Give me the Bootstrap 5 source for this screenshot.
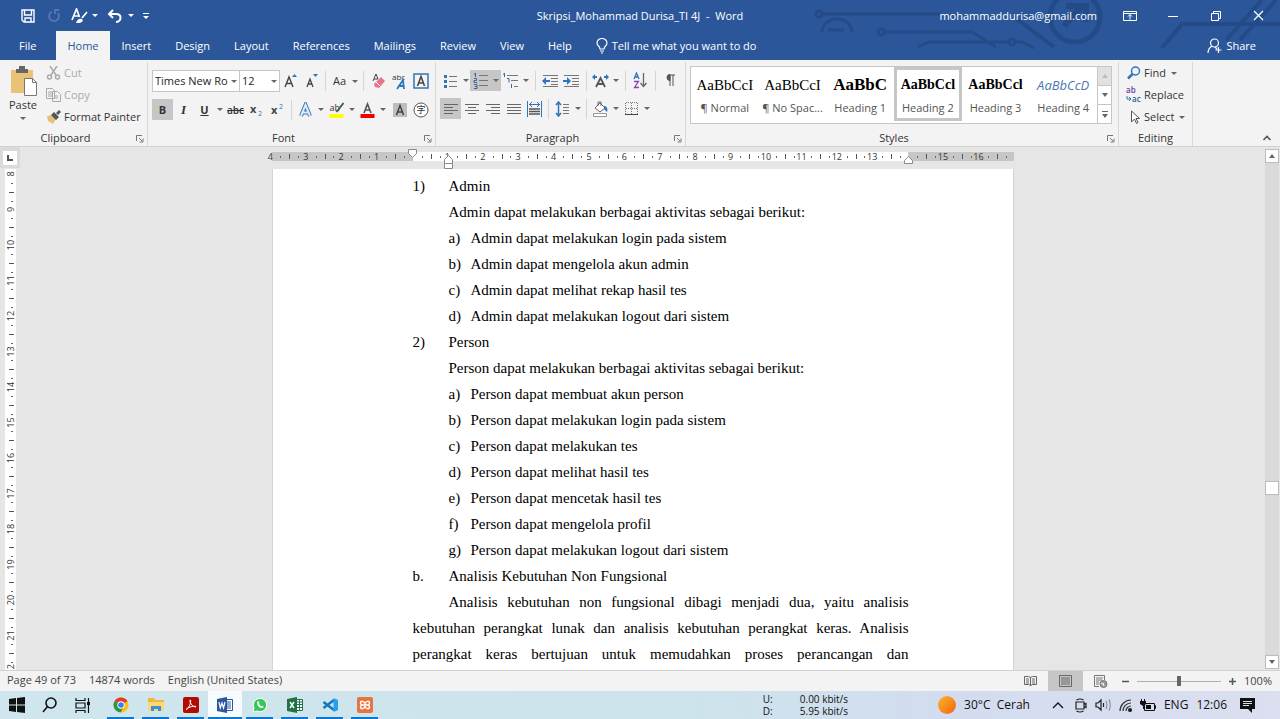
<!DOCTYPE html>
<html lang="en">
<head>
<meta charset="utf-8">
<meta name="viewport" content="width=device-width, initial-scale=1">
<title>Skripsi_Mohammad Durisa_TI 4J - Word</title>
<link href="https://cdn.jsdelivr.net/npm/bootstrap@5.3.0/dist/css/bootstrap.min.css" rel="stylesheet">
<style>
  :root { --word: #2b579a; --ink: #444; --accent: #2f74bd; --held: #c6c6c6; }
  body { font: 11px/16px "Open Sans", "Noto Sans", sans-serif; color: #333; background: #e6e6e6; }
  svg { display: block; flex: none; }
  .btn, .form-control, .form-select { font-size: 11px; line-height: 16px; border-radius: 0; }
  .btn { --bs-btn-padding-x: 0; --bs-btn-padding-y: 0; --bs-btn-border-width: 0; --bs-btn-color: #333; display: flex; align-items: center; justify-content: center; white-space: nowrap; }
  /* title bar and tabs */
  .app-head { background: var(--word); color: #fff; }
  .app-head .btn, .app-head .nav-link { color: #fff; }
  .circuit { right: 0; top: 0; }
  .title-row { height: 31px; }
  .title-row > div { flex: 1 1 0; }
  .quick { gap: 5px; }
  .quick > :first-child { margin-left: 17px; }
  .win-ctl > .btn { margin-left: 22px; }
  .win-ctl > :last-child { margin-right: 11px; }
  .tab-row { height: 29px; }
  .tab-row .nav-link { padding: 0 12px; line-height: 29px; font-size: 11px; border-radius: 0; white-space: nowrap; }
  .tab-row .nav-link.active { background: #f3f3f3; color: var(--word); padding: 0 11px; }
  .tab-row .nav-link.file-tab { padding: 0 20px 0 19px; }
  /* ribbon */
  .ribbon { background: #f3f3f3; border-bottom: 1px solid #d2d2d2; height: 87px; }
  .rgroup { border-right: 1px solid #d8d8d8; margin: 2px 0 0; padding: 0 4px; }
  .rgroup footer { height: 16px; flex: none; }
  .rgroup > .d-flex { min-height: 0; }
  .tool-rows { gap: 7px; padding-top: 8px; }
  .launcher { right: 3px; bottom: 3px; }
  .tool { height: 21px; min-width: 21px; }
  .tool.drop::after, .caret::after { content: ""; flex: none; border: 3px solid transparent; border-top-color: #666; border-bottom: 0; margin: 0 2px; }
  .app-head .tool.drop::after { border-top-color: #fff; }
  .tool.drop > svg, .tool.drop > span { width: 21px; }
  .tool.held { background: var(--held); }
  .serif-i { font-family: "Liberation Serif", serif; font-size: 13px; }
  .struck { font-size: 10px; }
  .rule { width: 1px; height: 20px; background: #d5d5d5; margin: 0 3px; }
  .rule-wide { margin: 0 4px; }
  .combo { height: 22px; border: 1px solid #c6c6c6; background: #fff; }
  .combo input { border: 0; padding: 0 0 0 2px; min-width: 0; background: none; }
  .combo-font { width: 88px; } .combo-size { width: 40px; }
  .lines { height: 22px; justify-content: flex-start; gap: 3px; }
  .btn.faded, .btn.faded:disabled { color: #aaa; opacity: 1; }
  .gallery { border: 1px solid #c6c6c6; background: #fff; height: 58px; width: 422px; }
  .gallery .style-item { flex: 1 1 0; min-width: 0; height: 54px; flex-direction: column; justify-content: flex-end; border: 3px solid transparent; }
  .gallery .style-item.chosen { border-color: #c6c6c6; }
  .style-item b, .style-item i, .style-item span { font: 15px/26px "Liberation Serif", serif; color: #000; }
  .style-item b { font-weight: 700; font-size: 14px; }
  .style-item .big { font-size: 17px; }
  .style-item i { font: italic 13px/26px "Open Sans", sans-serif; color: #4f78ae; }
  .style-item small { font-size: 11px; line-height: 20px; color: #555; }
  .gal-scroll { width: 14px; border-left: 1px solid #c6c6c6; }
  .gal-scroll .btn { flex: 1; }
  .gal-scroll .btn + .btn { border-top: 1px solid #c6c6c6; }
  .gal-scroll .btn:first-child { background: #e1e1e1; }
  /* document area */
  .side-rule { width: 20px; }
  .tab-mark { width: 20px; height: 21px; background: #dadada; padding: 4px 3px; }
  .tab-mark .btn { background: #fff; width: 14px; height: 14px; }
  .ruler { height: 22px; }
  .sheet { width: 742px; background: #fff; border: 1px solid #d4d4d4; border-top: 0; border-bottom: 0; padding: 4px 104px 0 140px; font: 15px/26px "Liberation Serif", serif; color: #000; }
  .sheet ul { list-style: none; margin: 0; padding: 0; }
  .sheet p { margin: 0; }
  .mark-a { width: 36px; flex: none; } .mark-b { width: 22px; flex: none; }
  .body-par { text-align: justify; text-align-last: justify; text-indent: 36px; }
  .scroll { width: 14px; background: #dadada; margin: 2px 1px 1px 0; }
  .scroll .btn, .thumb { background: #fff; border: 1px solid #bcbcbc; height: 14px; }
  .track-top { flex: 319 1 0; } .track-bot { flex: 160 1 0; }
  /* status bar and task bar */
  .status { height: 21px; background: #f3f3f3; border-top: 1px solid #d2d2d2; color: #444; padding-left: 7px; }
  .status-info { gap: 13px; padding-bottom: 2px; }
  .status .btn { height: 20px; width: 35px; }
  .status .chosen { background: var(--held); }
  .status .zoom-step { width: 15px; }
  .zoom { appearance: none; width: 84px; height: 12px; background: linear-gradient(#b0b0b0, #b0b0b0) center / 100% 1px no-repeat; }
  .zoom::-webkit-slider-thumb { appearance: none; width: 4px; height: 10px; background: #666; }
  .taskbar { height: 28px; background: linear-gradient(90deg, #cfe6ee 0%, #cde3ec 55%, #d3dcef 75%, #dbdff0 100%); color: #111; }
  .taskbar .btn { height: 28px; min-width: 17px; }
  .taskbar .task { width: 27px; border-bottom: 2px solid #0a78d0; padding-top: 1px; }
  .taskbar .front { width: 34px; margin: 0 -4px; background: #f6fbfd; }
  .task-list { gap: 8px; padding-left: 8px; }
  .net { font-size: 10px; line-height: 12px; margin-right: 38px; }
  .net-label { width: 37px; }
  .tray { font-size: 12px; }
</style>
</head>
<body class="vh-100 d-flex flex-column overflow-hidden">

<header class="app-head position-relative">
  <svg class="circuit position-absolute" width="520" height="60" viewBox="0 0 520 60" fill="none" stroke="#244b88" stroke-width="3">
    <circle cx="59" cy="14" r="3"/><path d="M63 14H180"/>
    <path d="M62 32a15 13 0 0 1 30 0M68 30h16"/>
    <circle cx="121" cy="32" r="3"/><path d="M125 32h87l24 15M158 47l11-5h80M256 42h6l12 6"/><circle cx="252" cy="42" r="3"/>
    <path d="M254 17l40 30" stroke-width="4"/>
    <circle cx="315" cy="17" r="25" stroke-width="5"/><path d="M304 26l18-20M306 6h20v16" stroke-width="6"/>
    <path d="M402 48l20-24H520M466 40L502 0M480 40L516 0" stroke-width="4"/>
  </svg>
  <div class="title-row d-flex align-items-center position-relative">
    <div class="quick d-flex align-items-center">
      <button class="btn tool" aria-label="Save"><svg width="14" height="14" viewBox="0 0 14 14" fill="none" stroke="#fff" stroke-width="1.4"><path d="M1 1h12v12H3l-2-2zM3.500 1v5h7V1M4 13V9h6v4"/></svg></button>
      <button class="btn tool" aria-label="Repeat"><svg width="14" height="14" viewBox="0 0 14 14" fill="none" stroke="#5478b3" stroke-width="1.800"><path d="M5 2.500A5 5 0 1 0 11 4M8 5V1h4"/></svg></button>
      <button class="btn tool drop" aria-label="Format"><svg width="21" height="16" viewBox="0 0 21 16" fill="none" stroke="#fff" stroke-width="1.700"><path d="M3 12L7.500 1l3 8M5 8h5M18 4l-5 6"/><path d="M7 15c1-4 4-5 6-4l1 2-3 2z" fill="#fff" stroke="none"/></svg></button>
      <button class="btn tool drop" aria-label="Undo"><svg width="21" height="14" viewBox="0 0 21 14" fill="none" stroke="#fff" stroke-width="2"><path d="M8 1L4 5l4 4M4 5h7c6 0 6 7 0 8"/></svg></button>
      <button class="btn" aria-label="Customize Quick Access Toolbar"><svg width="10" height="10" viewBox="0 0 10 10"><path d="M2 2h6v1H2zM2 5h6L5 8z" fill="#fff"/></svg></button>
    </div>
    <span>Skripsi_Mohammad Durisa_TI 4J&nbsp; -&nbsp; Word</span>
    <div class="win-ctl d-flex align-items-center justify-content-end">
      <span>mohammaddurisa@gmail.com</span>
      <button class="btn tool" aria-label="Ribbon Display Options"><svg width="14" height="12" viewBox="0 0 14 12" fill="none" stroke="#fff"><path d="M.5 1.500h13v9H.5zM.5 3.500h13M7 9.500v-5M5 6.500l2-2 2 2"/></svg></button>
      <button class="btn tool" aria-label="Minimize"><svg width="10" height="10" viewBox="0 0 10 10" stroke="#fff"><path d="M0 5.500h10"/></svg></button>
      <button class="btn tool" aria-label="Restore"><svg width="10" height="10" viewBox="0 0 10 10" fill="none" stroke="#fff"><path d="M.5 2.500h7v7h-7zM2.500 2.500v-2h7v7h-2"/></svg></button>
      <button class="btn tool" aria-label="Close"><svg width="11" height="11" viewBox="0 0 11 11" stroke="#fff" stroke-width="1.200"><path d="M1 1l9 9M10 1l-9 9"/></svg></button>
    </div>
  </div>
  <nav class="tab-row d-flex align-items-center position-relative">
    <a class="nav-link file-tab" href="#">File</a>
    <a class="nav-link active" href="#">Home</a>
    <a class="nav-link" href="#">Insert</a>
    <a class="nav-link" href="#">Design</a>
    <a class="nav-link" href="#">Layout</a>
    <a class="nav-link" href="#">References</a>
    <a class="nav-link" href="#">Mailings</a>
    <a class="nav-link" href="#">Review</a>
    <a class="nav-link" href="#">View</a>
    <a class="nav-link" href="#">Help</a>
    <a class="nav-link d-flex align-items-center gap-1" href="#"><svg width="12" height="16" viewBox="0 0 12 16" fill="none" stroke="#fff" stroke-width="1.200"><path d="M4 11C4 8 1 8 1 5a5 4.500 0 0 1 10 0c0 3-3 3-3 6zM4 13h4M5 15h2"/></svg>Tell me what you want to do</a>
    <button class="btn gap-1 ms-auto me-4"><svg width="15" height="16" viewBox="0 0 15 16" fill="none" stroke="#fff" stroke-width="1.200"><circle cx="7.500" cy="5" r="4"/><path d="M5 8c-3 2-4 4-4 7M8 9l2 2M11.500 9v6M8.500 12h6"/></svg>Share</button>
  </nav>
</header>

<section class="ribbon d-flex">
  <section class="rgroup position-relative d-flex flex-column" style="width:148px">
    <div class="d-flex flex-grow-1">
      <button class="btn flex-column justify-content-start caret ms-1 me-2 pt-1"><svg width="30" height="31" viewBox="0 0 30 31"><path d="M3 4h22v23H3z" fill="#eac276"/><path d="M8 7V3h3V0h6v3h3v4z" fill="#666"/><path d="M16.500 12.500h8l4 4v13h-12z" fill="#fff" stroke="#777"/><path d="M24.500 12.500v4h4" fill="none" stroke="#777"/></svg><span class="mb-1">Paste</span></button>
      <div>
        <button class="btn lines faded" disabled><svg width="15" height="14" viewBox="0 0 15 14" fill="none" stroke="#aaa" stroke-width="1.500"><path d="M4 0l6 9M11 0L5 9"/><circle cx="3.500" cy="11" r="2"/><circle cx="11.500" cy="11" r="2"/></svg>Cut</button>
        <button class="btn lines faded" disabled><svg width="15" height="14" viewBox="0 0 15 14" fill="#f3f3f3" stroke="#aaa"><path d="M.5.5h6l2 2v8h-8zM2 4h4M2 6h4M2 8h4M6.500 3.500h5l3 3v7h-8zM8 8h4M8 10h4"/></svg>Copy</button>
        <button class="btn lines"><svg width="15" height="14" viewBox="0 0 15 14"><path d="M1 6l5-1 4 4-3 5-5-3z" fill="#eabf7c"/><path d="M5 5l3-3 5 5-3 3zM10 3l3-3 2 2-3 3z" fill="#555"/></svg>Format Painter</button>
      </div>
    </div>
    <footer class="text-center pe-3">Clipboard</footer>
    <button class="btn launcher position-absolute" aria-label="Clipboard settings"><svg width="8" height="8" viewBox="0 0 8 8" fill="none" stroke="#777"><path d="M.5 6V.5H6M3 3l3 3M7 3.500V7H3.500"/></svg></button>
  </section>

  <section class="rgroup position-relative d-flex flex-column" style="width:288px">
    <div class="tool-rows d-flex flex-column flex-grow-1">
      <div class="d-flex align-items-center">
        <div class="combo combo-font d-flex caret align-items-center"><input class="form-control" aria-label="Font" value="Times New Ro"></div>
        <div class="combo combo-size d-flex caret align-items-center border-start-0"><input class="form-control" aria-label="Font size" value="12"></div>
        <button class="btn tool" aria-label="Grow font"><svg width="15" height="16" viewBox="0 0 15 16"><path d="M2 14L6 4l4 10M3.500 10.500h5" fill="none" stroke="#444" stroke-width="1.400"/><path d="M9 4h5l-2.500-3z" fill="#2f74bd"/></svg></button>
        <button class="btn tool" aria-label="Shrink font"><svg width="15" height="16" viewBox="0 0 15 16"><path d="M3 14l3-8 3 8M4 11h4" fill="none" stroke="#444" stroke-width="1.300"/><path d="M9 1h5l-2.500 3z" fill="#2f74bd"/></svg></button>
        <i class="rule"></i>
        <button class="btn tool drop"><span>Aa</span></button>
        <i class="rule"></i>
        <button class="btn tool ms-auto" aria-label="Clear formatting"><svg width="15" height="16" viewBox="0 0 15 16"><path d="M2 8l3-7 2 5M3 6h4" fill="none" stroke="#444"/><path d="M3 11l7-7 4 4-6 7-4-1z" fill="#e8748a"/><path d="M5 9l4 4" stroke="#fff"/></svg></button>
        <button class="btn tool" aria-label="Phonetic guide"><svg width="17" height="18" viewBox="0 0 17 18"><text x="1" y="8" font-size="8" fill="#333">abc</text><path d="M6 17l6-9 1 9M8 14h5" fill="none" stroke="#2f74bd" stroke-width="1.800"/></svg></button>
        <button class="btn tool" aria-label="Character border"><svg width="16" height="16" viewBox="0 0 16 16" fill="none" stroke="#444" stroke-width="1.500"><rect x="1" y="1" width="14" height="14" stroke="#2f74bd"/><path d="M4.500 13L8 3.500 11.500 13M5.500 10h5"/></svg></button>
      </div>
      <div class="d-flex align-items-center">
        <button class="btn tool held fw-bold">B</button>
        <button class="btn tool fst-italic fw-bold serif-i">I</button>
        <button class="btn tool drop fw-bold"><span class="text-decoration-underline">U</span></button>
        <button class="btn tool text-decoration-line-through fw-semibold struck">abc</button>
        <button class="btn tool" aria-label="Subscript"><svg width="16" height="18" viewBox="0 0 16 18"><text x="1" y="12" font-size="11" font-weight="700" fill="#444">x</text><text x="9" y="15" font-size="7" fill="#2f74bd">2</text></svg></button>
        <button class="btn tool" aria-label="Superscript"><svg width="16" height="18" viewBox="0 0 16 18"><text x="1" y="13" font-size="11" font-weight="700" fill="#444">x</text><text x="9" y="8" font-size="7" fill="#2f74bd">2</text></svg></button>
        <i class="rule"></i>
        <button class="btn tool drop" aria-label="Text effects"><svg width="15" height="16" viewBox="0 0 15 16" fill="none"><path d="M3 14L7.500 3 12 14M5 10.500h5" stroke="#3b78bd" stroke-width="4"/><path d="M3 14L7.500 3 12 14M5 10.500h5" stroke="#dfeaf5" stroke-width="2"/></svg></button>
        <button class="btn tool drop" aria-label="Highlight"><svg width="16" height="18" viewBox="0 0 16 18"><text x="1" y="10" font-size="9" fill="#333">ab</text><path d="M15 2L8 11" stroke="#555" stroke-width="2"/><path d="M1 13h14v4H1z" fill="#ff0"/></svg></button>
        <button class="btn tool drop" aria-label="Font colour"><svg width="16" height="18" viewBox="0 0 16 18"><path d="M4.500 12L8 3l3.500 9M5.500 9h5" fill="none" stroke="#555" stroke-width="1.600"/><path d="M1 13h14v4H1z" fill="#e00"/></svg></button>
        <button class="btn tool ms-auto" aria-label="Character shading"><svg width="14" height="14" viewBox="0 0 14 14" fill="none" stroke="#444" stroke-width="1.500"><path d="M0 0h14v14H0z" fill="#bdbdbd" stroke="none"/><path d="M3.500 12L7 2.500l3.500 9.500M4.500 9h5"/></svg></button>
        <button class="btn tool" aria-label="Enclose characters"><svg width="18" height="18" viewBox="0 0 18 18"><circle cx="9" cy="9" r="7" fill="#fff" stroke="#555"/><text x="9" y="12" font-size="9" text-anchor="middle" font-family="Noto Sans CJK SC, sans-serif" fill="#333">字</text></svg></button>
      </div>
    </div>
    <footer class="text-center pe-3">Font</footer>
    <button class="btn launcher position-absolute" aria-label="Font settings"><svg width="8" height="8" viewBox="0 0 8 8" fill="none" stroke="#777"><path d="M.5 6V.5H6M3 3l3 3M7 3.500V7H3.500"/></svg></button>
  </section>

  <section class="rgroup position-relative d-flex flex-column" style="width:250px">
    <div class="tool-rows d-flex flex-column flex-grow-1">
      <div class="d-flex align-items-center">
        <button class="btn tool drop" aria-label="Bullets"><svg width="15" height="16" viewBox="0 0 15 16"><path d="M1 2h3v3H1zM1 7h3v3H1zM1 12h3v3H1z" fill="#2f74bd"/><path d="M6 3.500h8M6 8.500h8M6 13.500h8" stroke="#777"/></svg></button>
        <button class="btn tool drop held" aria-label="Numbering"><svg width="15" height="17" viewBox="0 0 15 17"><path d="M2.500 1v4M1 2h1.500M1 6.500h2.500v2H1v2h3M1 12.500h3v4H1M2 14.500h2" fill="none" stroke="#3b6695"/><path d="M6 3.500h9M6 8.500h9M6 13.500h9" stroke="#777"/></svg></button>
        <button class="btn tool drop" aria-label="Multilevel list"><svg width="17" height="17" viewBox="0 0 17 17" fill="none"><path d="M2.500 1v4M1 2h1.500M5 6.500h2v4M9.500 12v4" stroke="#3b6695"/><path d="M5 3.500h11M9 8.500h7M12 14.500h4" stroke="#777"/></svg></button>
        <i class="rule rule-wide"></i>
        <button class="btn tool" aria-label="Decrease indent"><svg width="17" height="14" viewBox="0 0 17 14"><path d="M1 1.500h15M9 4.500h7M9 7.500h7M9 10.500h7M1 12.500h15" stroke="#777"/><path d="M0 7l4-4v3h4v2H4v3z" fill="#2f74bd"/></svg></button>
        <button class="btn tool" aria-label="Increase indent"><svg width="17" height="14" viewBox="0 0 17 14"><path d="M1 1.500h15M9 4.500h7M9 7.500h7M9 10.500h7M1 12.500h15" stroke="#777"/><path d="M8 7L4 3v3H0v2h4v3z" fill="#2f74bd"/></svg></button>
        <i class="rule rule-wide"></i>
        <button class="btn tool drop" aria-label="Asian layout"><svg width="17" height="16" viewBox="0 0 17 16"><path d="M4 14l4.500-9L13 14M6 11h5" fill="none" stroke="#555" stroke-width="1.800"/><path d="M0 4l3-3v2h2v2H3v2zM17 4l-3-3v2h-2v2h2v2z" fill="#2f74bd"/></svg></button>
        <i class="rule rule-wide"></i>
        <button class="btn tool" aria-label="Sort"><svg width="14" height="17" viewBox="0 0 14 17" fill="none"><path d="M1 7l2.500-6L6 7M2 5h3" stroke="#2f74bd" stroke-width="1.300"/><path d="M1 9.500h4.500l-4 6H6" stroke="#8a3fb0" stroke-width="1.300"/><path d="M10.500 1v13M7.500 11l3 3.500 3-3.500" stroke="#666" stroke-width="1.300"/></svg></button>
        <i class="rule rule-wide"></i>
        <button class="btn tool" aria-label="Show paragraph marks"><svg width="10" height="13" viewBox="0 0 10 13"><path d="M5 1v11M8 1v11M4 1h6" stroke="#555" fill="none"/><path d="M5 .5a3 3 0 0 0 0 6z" fill="#555" stroke="#555"/></svg></button>
      </div>
      <div class="d-flex align-items-center">
        <button class="btn tool held" aria-label="Align left"><svg width="14" height="12" viewBox="0 0 14 12" stroke="#666"><path d="M0 1.500h14M0 4.500h9M0 7.500h14M0 10.500h9"/></svg></button>
        <button class="btn tool" aria-label="Center"><svg width="14" height="12" viewBox="0 0 14 12" stroke="#666"><path d="M0 1.500h14M3 4.500h8M0 7.500h14M3 10.500h8"/></svg></button>
        <button class="btn tool" aria-label="Align right"><svg width="14" height="12" viewBox="0 0 14 12" stroke="#666"><path d="M0 1.500h14M5 4.500h9M0 7.500h14M5 10.500h9"/></svg></button>
        <button class="btn tool" aria-label="Justify"><svg width="14" height="12" viewBox="0 0 14 12" stroke="#666"><path d="M0 1.500h14M0 4.500h14M0 7.500h14M0 10.500h14"/></svg></button>
        <button class="btn tool" aria-label="Distributed"><svg width="15" height="16" viewBox="0 0 15 16" fill="none"><path d="M.5 0v16M14.500 0v16M2 3.500h11M5 1L2.500 3.500 5 6M10 1l2.500 2.500L10 6" stroke="#2f74bd"/><path d="M2 8h11M2 10.500h11M2 13h11" stroke="#555" stroke-width="1.500"/></svg></button>
        <i class="rule"></i>
        <button class="btn tool drop" aria-label="Line spacing"><svg width="15" height="16" viewBox="0 0 15 16" fill="none"><path d="M3.500 2v12M1 4l2.500-3L6 4M1 12l2.500 3L6 12" stroke="#2f74bd" stroke-width="1.500"/><path d="M8 3.500h6M8 6.500h6M8 9.500h6M8 12.500h6" stroke="#777"/></svg></button>
        <i class="rule"></i>
        <button class="btn tool drop" aria-label="Shading"><svg width="17" height="16" viewBox="0 0 17 16"><path d="M8 2l5 5-5 4-5-4z" fill="#fff" stroke="#666"/><path d="M6 5V1h3v4" fill="none" stroke="#666"/><path d="M12 5c3 0 4 3 3 6l-3-3z" fill="#2f74bd"/><path d="M1.500 12.500h13v3h-13z" fill="#fff" stroke="#999"/></svg></button>
        <button class="btn tool drop" aria-label="Borders"><svg width="13" height="13" viewBox="0 0 13 13" fill="none"><path d="M.5 12V.5h12V12M6.500 1v11M1 6.500h11" stroke="#777" stroke-dasharray="1 1"/><path d="M0 12.500h13" stroke="#444"/></svg></button>
      </div>
    </div>
    <footer class="text-center pe-3">Paragraph</footer>
    <button class="btn launcher position-absolute" aria-label="Paragraph settings"><svg width="8" height="8" viewBox="0 0 8 8" fill="none" stroke="#777"><path d="M.5 6V.5H6M3 3l3 3M7 3.500V7H3.500"/></svg></button>
  </section>

  <section class="rgroup position-relative d-flex flex-column" style="width:433px">
    <div class="flex-grow-1 pt-1">
      <div class="gallery d-flex">
        <button class="btn style-item"><span>AaBbCcI</span><small>¶ Normal</small></button>
        <button class="btn style-item"><span>AaBbCcI</span><small>¶ No Spac...</small></button>
        <button class="btn style-item"><b class="big">AaBbC</b><small>Heading 1</small></button>
        <button class="btn style-item chosen"><b>AaBbCcl</b><small>Heading 2</small></button>
        <button class="btn style-item"><b>AaBbCcl</b><small>Heading 3</small></button>
        <button class="btn style-item"><i>AaBbCcD</i><small>Heading 4</small></button>
        <div class="gal-scroll d-flex flex-column">
          <button class="btn" aria-label="Previous styles"><svg width="6" height="4" viewBox="0 0 6 4"><path d="M0 4h6L3 0z" fill="#bbb"/></svg></button>
          <button class="btn" aria-label="Next styles"><svg width="6" height="4" viewBox="0 0 6 4"><path d="M0 0h6L3 4z" fill="#666"/></svg></button>
          <button class="btn" aria-label="More styles"><svg width="6" height="7" viewBox="0 0 6 7"><path d="M0 0h6v1H0zM0 3h6L3 7z" fill="#666"/></svg></button>
        </div>
      </div>
    </div>
    <footer class="text-center pe-3">Styles</footer>
    <button class="btn launcher position-absolute" aria-label="Styles settings"><svg width="8" height="8" viewBox="0 0 8 8" fill="none" stroke="#777"><path d="M.5 6V.5H6M3 3l3 3M7 3.500V7H3.500"/></svg></button>
  </section>

  <section class="rgroup d-flex flex-column" style="width:74px">
    <div class="flex-grow-1 ps-1">
      <button class="btn lines caret"><svg width="14" height="14" viewBox="0 0 14 14" fill="none" stroke="#2f74bd"><circle cx="8.500" cy="5" r="4" stroke-width="1.500"/><path d="M5.500 8L1 12.500" stroke-width="2.500"/></svg>Find</button>
      <button class="btn lines"><svg width="14" height="20" viewBox="0 0 14 20" overflow="visible"><text x="-1" y="8" font-size="8" font-weight="600" fill="#6b3f9a">ab</text><text x="5" y="17" font-size="8" font-weight="600" fill="#2f5f9b">ac</text><path d="M0 11v3h3M2 12l2 2-2 2" fill="none" stroke="#2f74bd"/></svg>Replace</button>
      <button class="btn lines caret"><svg width="14" height="14" viewBox="0 0 14 14"><path d="M4.500 1v11l3-3 2 4.500 1.500-1-2-4h3.500z" fill="#fff" stroke="#555"/></svg>Select</button>
    </div>
    <footer class="text-center">Editing</footer>
  </section>
  <button class="btn ms-auto mt-auto me-2 mb-1" aria-label="Collapse ribbon"><svg width="10" height="8" viewBox="0 0 10 8" fill="none" stroke="#555" stroke-width="1.600"><path d="M1.500 6L5 2.500 8.500 6"/></svg></button>
</section>

<main class="d-flex flex-grow-1 overflow-hidden">
  <div class="side-rule d-flex flex-column">
    <div class="tab-mark"><button class="btn" aria-label="Tab selector"><svg width="6" height="6" viewBox="0 0 6 6"><path d="M1 0v5h5" fill="none" stroke="#555" stroke-width="2"/></svg></button></div>
    <svg id="ruler-v" width="20" height="502" viewBox="0 0 20 502"><path d="M5 1h11v501H5z" fill="#fff"/></svg>
  </div>
  <div class="flex-grow-1 d-flex flex-column align-items-center">
    <div class="ruler"><svg id="ruler-h" width="742" height="22" viewBox="0 0 742 22" overflow="visible"><path d="M0 5h742v9H0z" fill="#c6c6c6"/><path d="M141 5h495v9H141z" fill="#fff"/></svg></div>
    <article class="sheet flex-grow-1">
      <ul>
        <li class="d-flex"><span class="mark-a">1)</span>
          <div>Admin<p>Admin dapat melakukan berbagai aktivitas sebagai berikut:</p>
            <ul>
              <li class="d-flex"><span class="mark-b">a)</span>Admin dapat melakukan login pada sistem</li>
              <li class="d-flex"><span class="mark-b">b)</span>Admin dapat mengelola akun admin</li>
              <li class="d-flex"><span class="mark-b">c)</span>Admin dapat melihat rekap hasil tes</li>
              <li class="d-flex"><span class="mark-b">d)</span>Admin dapat melakukan logout dari sistem</li>
            </ul></div></li>
        <li class="d-flex"><span class="mark-a">2)</span>
          <div>Person<p>Person dapat melakukan berbagai aktivitas sebagai berikut:</p>
            <ul>
              <li class="d-flex"><span class="mark-b">a)</span>Person dapat membuat akun person</li>
              <li class="d-flex"><span class="mark-b">b)</span>Person dapat melakukan login pada sistem</li>
              <li class="d-flex"><span class="mark-b">c)</span>Person dapat melakukan tes</li>
              <li class="d-flex"><span class="mark-b">d)</span>Person dapat melihat hasil tes</li>
              <li class="d-flex"><span class="mark-b">e)</span>Person dapat mencetak hasil tes</li>
              <li class="d-flex"><span class="mark-b">f)</span>Person dapat mengelola profil</li>
              <li class="d-flex"><span class="mark-b">g)</span>Person dapat melakukan logout dari sistem</li>
            </ul></div></li>
        <li class="d-flex"><span class="mark-a">b.</span>Analisis Kebutuhan Non Fungsional</li>
      </ul>
      <p class="body-par">Analisis kebutuhan non fungsional dibagi menjadi dua, yaitu analisis kebutuhan perangkat lunak dan analisis kebutuhan perangkat keras. Analisis perangkat keras bertujuan untuk memudahkan proses perancangan dan</p>
    </article>
  </div>
  <div class="scroll d-flex flex-column">
    <button class="btn" aria-label="Scroll up"><svg width="6" height="4" viewBox="0 0 6 4"><path d="M0 4h6L3 0z" fill="#666"/></svg></button>
    <div class="track-top"></div><div class="thumb"></div><div class="track-bot"></div>
    <button class="btn" aria-label="Scroll down"><svg width="6" height="4" viewBox="0 0 6 4"><path d="M0 0h6L3 4z" fill="#666"/></svg></button>
  </div>
</main>

<footer class="status d-flex align-items-center">
  <div class="status-info d-flex"><span>Page 49 of 73</span><span>14874 words</span><span>English (United States)</span></div>
  <div class="ms-auto d-flex align-items-center">
    <button class="btn" aria-label="Read mode"><svg width="13" height="12" viewBox="0 0 13 12" fill="none" stroke="#666"><path d="M6.500 2v9M.5 1.500h4l2 1 2-1h4v8h-4l-2 1-2-1h-4zM2 4h3M2 6h3M2 8h3M8 4h3M8 6h3M8 8h3"/></svg></button>
    <button class="btn chosen" aria-label="Print layout"><svg width="13" height="12" viewBox="0 0 13 12" fill="none" stroke="#666"><path d="M.5.5h12v11H.5zM2 3h9M2 5h9M2 7h9M2 9h9"/></svg></button>
    <button class="btn" aria-label="Web layout"><svg width="14" height="13" viewBox="0 0 14 13" fill="none" stroke="#777"><path d="M5 11.500H.5V.5h10V5M2 3h7M2 5h6M2 7h3M2 9h3"/><circle cx="9.500" cy="9" r="3.500" fill="#999"/><path d="M7 9l2-1 1 3" stroke="#fff"/></svg></button>
    <button class="btn zoom-step" aria-label="Zoom out"><svg width="7" height="7" viewBox="0 0 7 7" stroke="#555" stroke-width="1.500"><path d="M0 3.500h7"/></svg></button>
    <input type="range" class="zoom mx-1" aria-label="Zoom" min="0" max="100" value="50">
    <button class="btn zoom-step" aria-label="Zoom in"><svg width="7" height="7" viewBox="0 0 7 7" stroke="#555" stroke-width="1.500"><path d="M0 3.500h7M3.500 0v7"/></svg></button>
    <span class="ms-1 me-2">100%</span>
  </div>
</footer>

<footer class="taskbar d-flex align-items-center">
  <div class="task-list d-flex align-items-center">
    <button class="btn" aria-label="Start"><svg width="16" height="16" viewBox="0 0 16 16" fill="#111"><path d="M0 2l7-1v6.500H0zM8 1l8-1v7.500H8zM0 8.500h7V15l-7-1zM8 8.500h8V16l-8-1z"/></svg></button>
    <button class="btn ms-2" aria-label="Search"><svg width="16" height="16" viewBox="0 0 16 16" fill="none" stroke="#111" stroke-width="1.600"><circle cx="9" cy="6" r="5"/><path d="M5.500 9.500L1 15"/></svg></button>
    <button class="btn ms-2" aria-label="Task view"><svg width="16" height="15" viewBox="0 0 16 15" fill="none" stroke="#111" stroke-width="1.200"><path d="M1 0v2.500h9V0M1 15v-2.500h9V15M1 5h9v5H1zM13.500 0v15"/><path d="M12 4h3v3h-3z" fill="#111" stroke="none"/></svg></button>
    <button class="btn task ms-2" aria-label="Chrome"><svg width="16" height="16" viewBox="0 0 16 16"><circle cx="8" cy="8" r="7.500" fill="#fbc116"/><path d="M8 8L1.500 4.300A7.500 7.500 0 0 1 14.500 4.300z" fill="#e33b2e"/><path d="M8 8L1.500 4.300A7.500 7.500 0 0 0 7.500 15.500l3.500-6z" fill="#279847"/><circle cx="8" cy="8" r="3.700" fill="#fff"/><circle cx="8" cy="8" r="2.800" fill="#3b7ded"/></svg></button>
    <button class="btn task" aria-label="File Explorer"><svg width="16" height="15" viewBox="0 0 16 15"><path d="M0 1h6l1 2h9v11H0z" fill="#f0b93c"/><path d="M0 5h16v9H0z" fill="#fad774"/><path d="M3 14V9h10v5h-3v-2H6v2z" fill="#3c8fd4"/></svg></button>
    <button class="btn task" aria-label="Acrobat"><svg width="16" height="16" viewBox="0 0 16 16"><rect width="16" height="16" rx="2" fill="#b30b00"/><path d="M3 12.500c2 0 5.500-6.500 4.500-9.500-2 0 1 7 5.500 7 0-2-8 0-10 2.500z" fill="none" stroke="#fff"/></svg></button>
    <button class="btn task front" aria-label="Word"><svg width="16" height="16" viewBox="0 0 16 16"><path d="M8.500 2.500h7v11h-7z" fill="#fff" stroke="#2b579a"/><path d="M9 5h5M9 7h5M9 9h5M9 11h5" stroke="#2b579a"/><path d="M0 2l10-2v16L0 14z" fill="#2b579a"/><path d="M2 5l1.300 6L5 6l1.500 5L8 5" fill="none" stroke="#fff" stroke-width="1.200"/></svg></button>
    <button class="btn task" aria-label="WhatsApp"><svg width="16" height="16" viewBox="0 0 16 16"><path d="M1 15l1-4a6.700 6.700 0 1 1 3 3z" fill="#35c759" stroke="#fff"/><path d="M5.500 4.500C4 8 8 12.500 11.500 10.500l-.5-1.800-1.800.5L6.800 7l.7-1.200-.7-1.600z" fill="#fff"/></svg></button>
    <button class="btn task" aria-label="Excel"><svg width="16" height="16" viewBox="0 0 16 16"><path d="M8.500 2.500h7v11h-7z" fill="#fff" stroke="#217346"/><path d="M9 5h6M9 7.500h6M9 10.500h6M12.500 3v10" stroke="#217346"/><path d="M0 2l10-2v16L0 14z" fill="#217346"/><path d="M3 5l4 6M7 5l-4 6" stroke="#fff" stroke-width="1.400"/></svg></button>
    <button class="btn task" aria-label="Visual Studio Code"><svg width="16" height="16" viewBox="0 0 16 16" fill="none"><path d="M12 3L1.500 11M12 13L1.500 5" stroke="#1177bd" stroke-width="2.500"/><path d="M11.500 1L16 3v10l-4.500 2z" fill="#26a0ec"/></svg></button>
    <button class="btn task" aria-label="XAMPP"><svg width="16" height="16" viewBox="0 0 16 16"><rect width="16" height="16" rx="2" fill="#e8743b"/><path d="M8 6.500C7 4 3.500 3.500 3.500 6c0 1 .5 1.500 1.500 2-1 .5-1.500 1-1.500 2 0 2.500 3.500 2 4.500-.5 1 2.500 4.500 3 4.500.5 0-1-.5-1.500-1.500-2 1-.5 1.500-1 1.500-2 0-2.500-3.500-2-4.500.5zM5.500 8h5" fill="none" stroke="#fff" stroke-width="1.500"/></svg></button>
  </div>
  <div class="net ms-auto d-flex"><div class="net-label">U:<br>D:</div><div>0.00 kbit/s<br>5.95 kbit/s</div></div>
  <div class="tray d-flex align-items-center gap-2 ms-5">
    <svg class="ms-1" width="18" height="18" viewBox="0 0 18 18"><defs><linearGradient id="sun" x2="1" y2="1"><stop stop-color="#fbb52a"/><stop offset="1" stop-color="#f2650e"/></linearGradient></defs><circle cx="9" cy="9" r="9" fill="url(#sun)"/></svg>
    <span class="me-1">30°C&nbsp; Cerah</span>
    <button class="btn ms-2" aria-label="Show hidden icons"><svg width="12" height="8" viewBox="0 0 12 8" fill="none" stroke="#111" stroke-width="1.300"><path d="M1 7l5-5 5 5"/></svg></button>
    <svg width="12" height="15" viewBox="0 0 12 15" fill="none" stroke="#222" stroke-width="1.200"><path d="M1.500 2q3.500-2 7 0M1.500 13q3.500 2 7 0M1 4h8v7H1zM9 6.500l2-1v4l-2-1"/></svg>
    <svg width="16" height="14" viewBox="0 0 16 14" fill="none" stroke="#222" stroke-width="1.200"><path d="M1 5h2l3-3v10L3 9H1zM8.500 5v4"/><path d="M11 3c1 2 1 6 0 8M14 1.500c1.500 3 1.500 8 0 11" stroke="#888"/></svg>
    <svg width="13" height="13" viewBox="0 0 13 13" fill="none" stroke="#333" stroke-width="1.200"><path d="M1 12A11 11 0 0 1 12 1M4 12a8 8 0 0 1 8-8M7 12a5 5 0 0 1 5-5"/><circle cx="11" cy="11" r="1.500" fill="#111"/></svg>
    <svg width="16" height="13" viewBox="0 0 16 13"><path d="M4.500 4.500h10v7h-10zM14.500 6.500h1v3h-1z" fill="none" stroke="#111"/><path d="M6 6h5v4H6zM0 2h6v3L4 7v3H3V7L0 5zM1 0h1v2H1zM4 0h1v2H4z" fill="#111"/></svg>
    <span>ENG</span>
    <span>12:06</span>
    <button class="btn ms-1 me-4" aria-label="Notifications"><svg width="15" height="15" viewBox="0 0 15 15"><path d="M0 0h15v11h-3v4l-4-4H0z" fill="#111"/><path d="M3 3.500h9M3 5.500h9M3 7.500h6" stroke="#dde"/></svg></button>
  </div>
</footer>

<script src="https://cdn.jsdelivr.net/npm/bootstrap@5.3.0/dist/js/bootstrap.bundle.min.js"></script>
<script>
  // Ruler scales: one number per centimetre, a tick at each half and a dot at each quarter.
  const CM = 35.4;
  function node(parent, tag, attrs, text) {
    const n = document.createElementNS('http://www.w3.org/2000/svg', tag);
    for (const k in attrs) n.setAttribute(k, attrs[k]);
    if (text !== undefined) n.textContent = text;
    parent.appendChild(n);
  }
  const h = document.getElementById('ruler-h');
  for (let q = -16; q <= 67; q++) {
    const x = 141 + q * CM / 4, c = q / 4;
    if (q % 4 === 0) {
      if (c !== 0 && c !== 14) node(h, 'text', {x: x - 1, y: 13, 'font-size': 9, 'text-anchor': 'middle', fill: '#333'}, Math.abs(c));
    } else if (q % 2 === 0) node(h, 'rect', {x: Math.round(x), y: 7, width: 1, height: 5, fill: '#555'});
    else node(h, 'rect', {x: Math.round(x), y: 9, width: 1, height: 2, fill: '#666'});
  }
  // Indent markers
  node(h, 'path', {d: 'M136.500 2.500h8v4l-4 4-4-4z', fill: '#fff', stroke: '#888'});
  node(h, 'path', {d: 'M172.500 16.500v-4l4-4 4 4v4zM172.500 16.500h8v5h-8z', fill: '#fff', stroke: '#888'});
  node(h, 'path', {d: 'M632.500 16.500v-3l4-4 4 4v3z', fill: '#fff', stroke: '#888'});
  const v = document.getElementById('ruler-v');
  for (let q = 0; q <= 55; q++) {
    const y = 6 + q * 35.5 / 4;
    if (q % 4 === 0) node(v, 'text', {'font-size': 9, 'text-anchor': 'middle', fill: '#333', transform: `translate(14 ${y}) rotate(-90)`}, 8 + q / 4);
    else if (q % 2 === 0) node(v, 'rect', {x: 9, y: Math.round(y), width: 5, height: 1, fill: '#555'});
    else node(v, 'rect', {x: 11, y: Math.round(y), width: 2, height: 1, fill: '#666'});
  }
  // The last visible number runs under the status bar.
  node(v, 'text', {'font-size': 9, 'text-anchor': 'end', fill: '#333', transform: 'translate(14 496) rotate(-90)'}, 2);
</script>
</body>
</html>
